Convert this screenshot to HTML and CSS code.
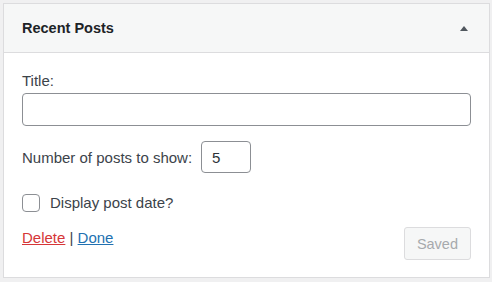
FILE: index.html
```html
<!DOCTYPE html>
<html lang="en">
<head>
    <meta charset="UTF-8">
    <meta name="viewport" content="width=device-width, initial-scale=1.0">
    <title>Recent Posts widget</title>
    <link rel="stylesheet" href="styles.css">
</head>
<body>
    <div class="widget">
        <div class="widget-top">
            <h3 class="widget-title">Recent Posts</h3>
            <span class="toggle-arrow"></span>
        </div>
        <div class="widget-inside">
            <label class="field-label" for="title">Title:</label>
            <input class="text-input" id="title" type="text">
            <div class="number-row">
                <label for="number">Number of posts to show:</label>
                <input class="number-input" id="number" type="text" value="5">
            </div>
            <div class="check-row">
                <span class="checkbox"></span>
                <span>Display post date?</span>
            </div>
            <div class="actions">
                <div class="links">
                    <a class="delete" href="#">Delete</a> | <a class="done" href="#">Done</a>
                </div>
                <button class="saved" disabled>Saved</button>
            </div>
        </div>
    </div>
</body>
</html>
```

FILE: styles.css
```css
body {
    margin: 0;
    padding: 3px 3px 0 3px;
    background: #f0f0f1;
    font-family: "Liberation Sans", Arial, sans-serif;
    font-size: 15px;
    line-height: 20px;
    color: #3c434a;
}
.widget {
    width: 485px;
    border: 1px solid #dcdcde;
    background: #fff;
}
.widget-top {
    height: 48px;
    display: flex;
    align-items: center;
    justify-content: space-between;
    padding: 0 21px 0 18px;
    background: #f6f7f7;
    border-bottom: 1px solid #dcdcde;
}
.widget-title {
    margin: 0;
    font-size: 14.5px;
    font-weight: bold;
    color: #1d2327;
}
.toggle-arrow {
    width: 0;
    height: 0;
    border-left: 4px solid transparent;
    border-right: 4px solid transparent;
    border-bottom: 5px solid #50575e;
}
.widget-inside {
    display: flex;
    flex-direction: column;
    padding: 18px 18px 17px 18px;
}
.field-label {
    margin-bottom: 2px;
}
input {
    font-family: inherit;
    font-size: 15px;
    color: #2c3338;
    border: 1px solid #8c8f94;
    border-radius: 4px;
    box-sizing: border-box;
    outline: none;
}
.text-input {
    width: 100%;
    height: 33px;
    padding: 0 8px;
}
.number-row {
    display: flex;
    align-items: baseline;
    gap: 9px;
    margin-top: 15px;
}
.number-input {
    width: 50px;
    height: 32px;
    padding: 0 10px;
}
.check-row {
    display: flex;
    align-items: center;
    gap: 10px;
    margin-top: 20px;
}
.checkbox {
    width: 16px;
    height: 16px;
    border: 1px solid #8c8f94;
    border-radius: 4px;
}
.actions {
    display: flex;
    justify-content: space-between;
    align-items: flex-start;
    margin-top: 13px;
}
.links {
    padding-top: 2px;
}
.delete {
    color: #d63638;
}
.done {
    color: #2271b1;
}
.saved {
    height: 33px;
    padding: 0 12px;
    margin-top: 1px;
    font-family: inherit;
    font-size: 14.5px;
    color: #a7aaad;
    background: #f6f7f7;
    border: 1px solid #dcdcde;
    border-radius: 3px;
}
```
